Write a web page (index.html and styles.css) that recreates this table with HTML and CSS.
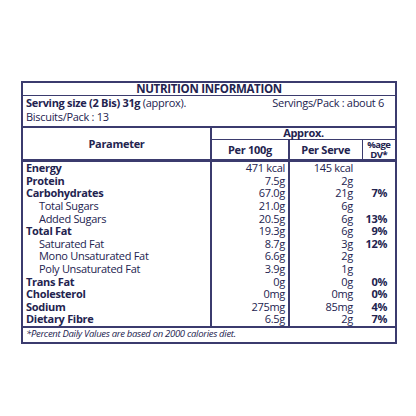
FILE: index.html
```html
<!DOCTYPE html>
<html>
<head>
<meta charset="utf-8">
<link rel="stylesheet" href="styles.css">
</head>
<body>
<div class="panel">
<table class="nt">
  <colgroup>
    <col class="c1"><col class="c2"><col class="c3"><col class="c4">
  </colgroup>
  <tr class="title"><td colspan="4">NUTRITION INFORMATION</td></tr>
  <tr class="serv">
    <td colspan="4">
      <div class="servline"><span><b>Serving size (2 Bis) 31g</b> (approx).</span><span>Servings/Pack : about 6</span></div>
      <div class="servline">Biscuits/Pack : 13</div>
    </td>
  </tr>
  <tr class="h1">
    <td rowspan="2" class="param">Parameter</td>
    <td colspan="3" class="approx">Approx.</td>
  </tr>
  <tr class="h2">
    <td>Per 100g</td>
    <td>Per Serve</td>
    <td class="dvh">%age<br>DV*</td>
  </tr>
  <tr class="d first"><td class="b">Energy</td><td>471 kcal</td><td>145 kcal</td><td></td></tr>
  <tr class="d"><td class="b">Protein</td><td>7.5g</td><td>2g</td><td></td></tr>
  <tr class="d"><td class="b">Carbohydrates</td><td>67.0g</td><td>21g</td><td>7%</td></tr>
  <tr class="d"><td class="s">Total Sugars</td><td>21.0g</td><td>6g</td><td></td></tr>
  <tr class="d"><td class="s">Added Sugars</td><td>20.5g</td><td>6g</td><td>13%</td></tr>
  <tr class="d"><td class="b">Total Fat</td><td>19.3g</td><td>6g</td><td>9%</td></tr>
  <tr class="d"><td class="s">Saturated Fat</td><td>8.7g</td><td>3g</td><td>12%</td></tr>
  <tr class="d"><td class="s">Mono Unsaturated Fat</td><td>6.6g</td><td>2g</td><td></td></tr>
  <tr class="d"><td class="s">Poly Unsaturated Fat</td><td>3.9g</td><td>1g</td><td></td></tr>
  <tr class="d"><td class="b">Trans Fat</td><td>0g</td><td>0g</td><td>0%</td></tr>
  <tr class="d"><td class="b">Cholesterol</td><td>0mg</td><td>0mg</td><td>0%</td></tr>
  <tr class="d"><td class="b">Sodium</td><td>275mg</td><td>85mg</td><td>4%</td></tr>
  <tr class="d last"><td class="b">Dietary Fibre</td><td>6.5g</td><td>2g</td><td>7%</td></tr>
  <tr class="foot"><td colspan="4">*Percent Daily Values are based on 2000 calories diet.</td></tr>
</table>
</div>
</body>
</html>
```
FILE: styles.css
```css
html, body {
  margin: 0;
  padding: 0;
  background: #ffffff;
}
body {
  width: 416px;
  height: 416px;
  font-family: "Open Sans", "Noto Sans", sans-serif;
  color: #23234f;
}
.panel {
  padding: 81px 0 0 21px;
}
.nt {
  border-collapse: collapse;
  width: 374px;
  table-layout: fixed;
  font-size: 11px;
  letter-spacing: -0.3px;
  line-height: 12px;
  border: 2px solid #3b3b6e;
}
.c1 { width: 189px; }
.c2 { width: 78px; }
.c3 { width: 73px; }
.c4 { width: 34px; }
.nt td {
  padding: 0;
  white-space: nowrap;
}
.title td {
  text-align: center;
  font-weight: 700;
  font-size: 11.5px;
  height: 12px;
  line-height: 12px;
  border-bottom: 1.5px solid #3b3b6e;
}
.serv td {
  padding: 0 11px 2px 3px;
  border-bottom: 2px solid #3b3b6e;
}
.servline {
  display: flex;
  justify-content: space-between;
  height: 14px;
  line-height: 14px;
}
.servline b { font-weight: 700; }
.param {
  text-align: center;
  font-weight: 700;
  border-right: 2px solid #3b3b6e;
  border-bottom: 3px solid #3b3b6e;
}
.approx {
  text-align: center;
  font-weight: 700;
  height: 9px;
  line-height: 10px;
  padding-bottom: 1px !important;
  border-bottom: 1.5px solid #3b3b6e;
}
.h2 td {
  text-align: center;
  font-weight: 700;
  height: 19px;
  line-height: 12px;
  border-bottom: 3px solid #3b3b6e;
}
.h2 td:first-child { border-right: 2px solid #3b3b6e; }
.h2 td:nth-child(2) { border-right: 1.5px solid #3b3b6e; }
.h2 .dvh {
  font-size: 9.5px;
  line-height: 9.5px;
  letter-spacing: -0.5px;
}
.d td {
  height: 12.6px;
  line-height: 12px;
  text-align: right;
}
.d td:first-child {
  text-align: left;
  border-right: 2px solid #3b3b6e;
}
.d td:nth-child(2) {
  padding-right: 3px;
  border-right: 2px solid #3b3b6e;
}
.d td:nth-child(3) {
  padding-right: 9px;
}
.d td:nth-child(4) {
  padding-right: 8px;
  font-weight: 700;
}
.d .b {
  font-weight: 700;
  padding-left: 3px;
}
.d .s {
  padding-left: 16px;
}
.d.last td { border-bottom: 2.5px solid #3b3b6e; }
.foot td {
  font-style: italic;
  font-size: 9.5px;
  letter-spacing: -0.3px;
  padding: 0 3px 2px;
  height: 12px;
}
```
